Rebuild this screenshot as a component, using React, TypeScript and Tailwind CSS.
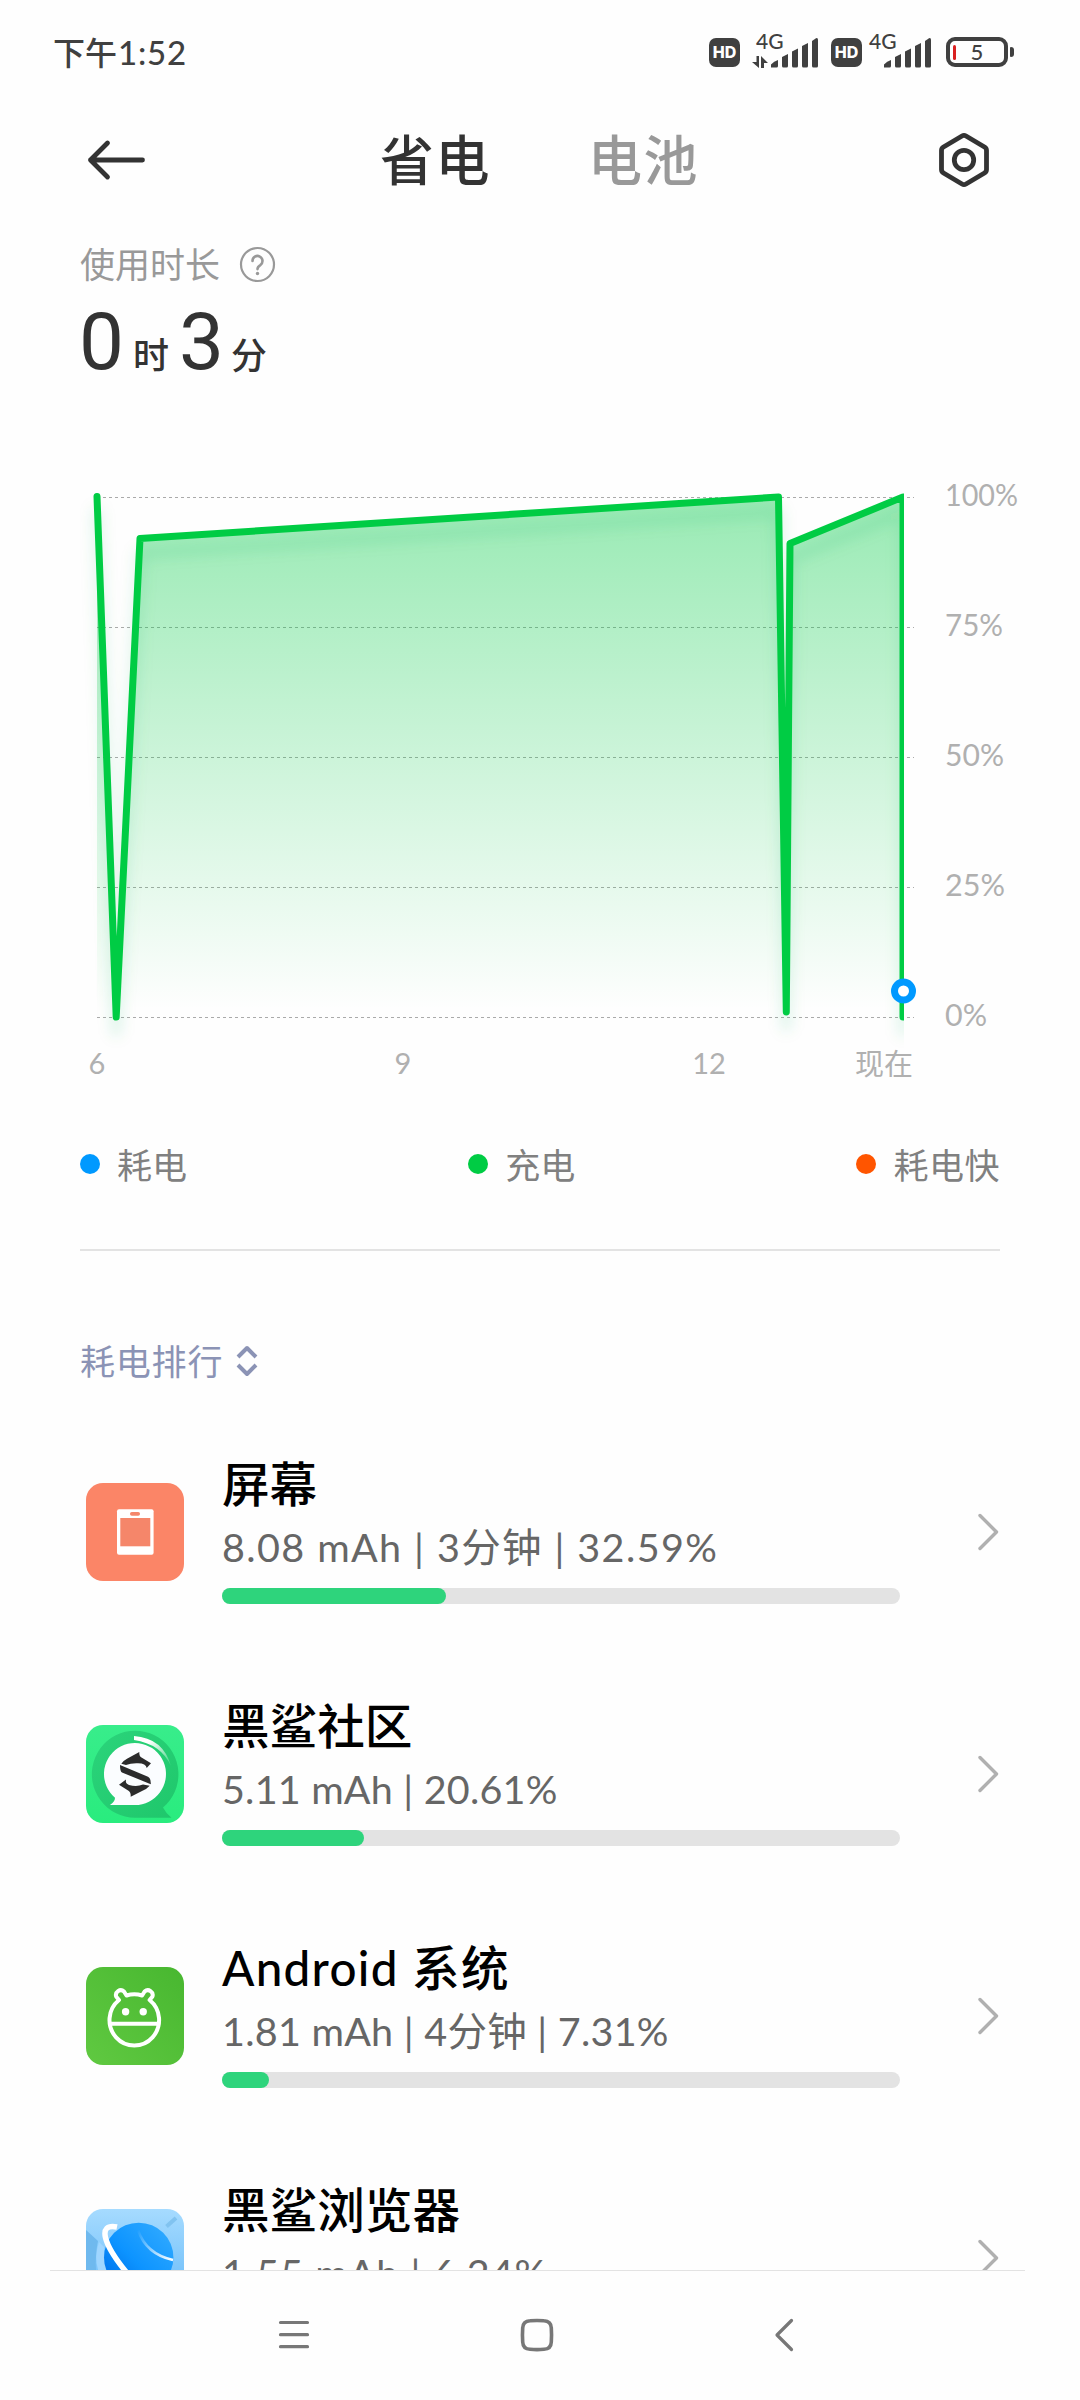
import type { ReactNode } from "react";

const SignalBars = () => (
  <svg width="48" height="30" viewBox="0 0 48 30" fill="#404040">
    <path d="M0 29.5v-3q3-3.5 7-4.500v6q0 1.500-1.500 1.500z" />
    <path d="M11 19l6-3v12q0 1.500-1.500 1.500h-3q-1.500 0-1.500-1.500z" />
    <path d="M21 13.500l6-3v17.500q0 1.500-1.500 1.500h-3q-1.500 0-1.500-1.500z" />
    <path d="M31 8l6-3v23q0 1.500-1.500 1.500h-3q-1.500 0-1.500-1.500z" />
    <path d="M41 3l4-2.800q2-.5 2 1.500V28q0 1.500-1.500 1.500h-3q-1.500 0-1.500-1.500z" />
  </svg>
);

const HdBadge = () => (
  <div className="flex h-[29px] w-[31px] items-center justify-center rounded-[7px] bg-[#404040] font-['Inter'] text-[16px] font-extrabold text-white">
    HD
  </div>
);

const StatusBar = () => (
  <div className="flex h-[106px] items-start pt-[33px] text-[#404040]">
    <div className="ml-[53px] flex h-[40px] items-center text-[32px] font-medium">
      下午
      <span className="ml-px text-[33px] tracking-[0.8px]">1:52</span>
    </div>
    <div className="mr-[66px] ml-auto flex h-[38px] items-center">
      <HdBadge />
      <div className="relative ml-3 flex h-[38px] w-[67px] items-end justify-end">
        <span className="absolute left-[4px] top-[-2px] text-[21px] leading-5 font-medium">4G</span>
        <svg className="mr-[3px] mb-[3px]" width="16" height="12" viewBox="0 0 16 12" fill="#404040">
          <path d="M4.500 0h2.500v12L0 6h4.500zM9 12V0l7 7h-4v5z" />
        </svg>
        <div className="mb-[3px]">
          <SignalBars />
        </div>
      </div>
      <div className="ml-3">
        <HdBadge />
      </div>
      <div className="relative ml-[7px] flex h-[38px] w-[63px] items-end justify-end">
        <span className="absolute left-0 top-[-2px] text-[21px] leading-5 font-medium">4G</span>
        <div className="mb-[3px]">
          <SignalBars />
        </div>
      </div>
      <div className="ml-[14px] flex items-center">
        <div className="relative flex h-[30px] w-[62px] items-center justify-center rounded-[9px] border-[4px] border-[#404040] text-[22px] leading-none font-medium">
          <span className="absolute left-[3px] h-[15px] w-[3px] rounded-full bg-[#d92020]" />
          5
        </div>
        <span className="ml-[2px] h-[10px] w-[4px] rounded-r-[3px] rounded-l-[1px] bg-[#404040]" />
      </div>
    </div>
  </div>
);

const Header = () => (
  <div className="flex h-[108px] items-center">
    <svg className="ml-[86px]" width="62" height="44" viewBox="0 0 62 44" fill="none" stroke="#333" strokeWidth="4.800" strokeLinecap="round" strokeLinejoin="round">
      <path d="M56.500 22H4.500M21.500 5L4.500 22l17 17" />
    </svg>
    <div className="ml-[232px] flex gap-[97px] pt-[2px] text-[54px] leading-none font-medium tracking-[1.5px]">
      <span className="text-[#333]">省电</span>
      <span className="text-[#999]">电池</span>
    </div>
    <svg className="mr-[88px] ml-auto" width="56" height="60" viewBox="0 0 56 60" fill="none" stroke="#333" strokeWidth="4.800" strokeLinejoin="round">
      <path d="M26 6q2-1.200 4 0l18.500 11q2 1.200 2 3.400v19.200q0 2.200-2 3.400L30 54q-2 1.200-4 0L7.500 43q-2-1.200-2-3.400V20.400q0-2.200 2-3.400z" />
      <circle cx="28" cy="30" r="9.700" />
    </svg>
  </div>
);

const Duration = () => (
  <div className="h-[256px] pt-[25px] pl-[80px]">
    <div className="flex h-[50px] items-center text-[35px] text-[#999]">
      使用时长
      <svg className="ml-[19px]" width="37" height="37" viewBox="0 0 37 37" fill="none" stroke="#999" strokeWidth="2.200" strokeLinecap="round">
        <circle cx="18.500" cy="18.500" r="16.500" />
        <path d="M13.500 15a5 5 0 1 1 7.800 4.100q-2.800 1.800-2.800 4" strokeWidth="2.600" />
        <circle cx="18.500" cy="27.500" r="1.700" fill="#999" stroke="none" />
      </svg>
    </div>
    <div className="mt-[5px] flex items-baseline text-[36px] text-[#333]">
      <span className="-ml-px w-[54px] font-['Roboto'] text-[80px] leading-[96px]">0</span>
      <span className="w-[46px] font-medium">时</span>
      <span className="w-[52px] font-['Roboto'] text-[80px] leading-[96px]">3</span>
      <span className="font-medium">分</span>
    </div>
  </div>
);

const gridLines = [
  { y: 497.5, label: "100%", width: 71 },
  { y: 627.5, label: "75%", width: 56 },
  { y: 757.5, label: "50%", width: 57 },
  { y: 887.5, label: "25%", width: 58 },
  { y: 1017.5, label: "0%", width: 40 },
];

const linePath = "M97 496.500L116.200 1017L140 538.500L778.500 497L786.300 1012L790 543.500L903 497V1017";

const BatteryChart = () => (
  <svg width="1080" height="630" viewBox="0 470 1080 630">
    <defs>
      <linearGradient id="area" gradientUnits="userSpaceOnUse" x1="0" y1="497" x2="0" y2="1010">
        <stop offset="0" stopColor="#00cc44" stopOpacity="0.4" />
        <stop offset="1" stopColor="#00cc44" stopOpacity="0" />
      </linearGradient>
      <filter id="glow" filterUnits="userSpaceOnUse" x="60" y="470" width="880" height="600">
        <feGaussianBlur stdDeviation="7" />
      </filter>
      <clipPath id="plot">
        <rect x="80" y="470" width="824" height="600" />
      </clipPath>
    </defs>
    {gridLines.map((line) => (
      <g key={line.label}>
        <path d={`M97 ${line.y}H914`} stroke="#aaa" strokeDasharray="3 3" />
        <text x="945" y={line.y + 8.5} fontSize="30" fill="#b0b0b0" textLength={line.width + 2} lengthAdjust="spacingAndGlyphs">
          {line.label}
        </text>
      </g>
    ))}
    <path d={`${linePath}H97Z`} fill="url(#area)" />
    <g clipPath="url(#plot)" fill="none" strokeLinejoin="round" strokeLinecap="round">
      <path d={linePath} transform="translate(0 15)" stroke="#1fae55" strokeOpacity="0.15" strokeWidth="9" filter="url(#glow)" />
      <path d={linePath} stroke="#00cc44" strokeWidth="7" />
    </g>
    <circle cx="903.500" cy="991" r="9" fill="#fff" stroke="#0099ff" strokeWidth="7" />
    <g fontSize="29" fill="#b0b0b0" textAnchor="middle">
      <text x="97" y="1074">6</text>
      <text x="403" y="1074">9</text>
      <text x="709" y="1074">12</text>
      <text x="884" y="1075">现在</text>
    </g>
  </svg>
);

const Legend = () => (
  <div className="mx-[80px] flex h-[151px] justify-between border-b-2 border-[#e3e3e3] pt-[40px] text-[35px] leading-[50px] text-[#808080]">
    <div className="flex h-[50px] items-center gap-[17px]">
      <span className="mb-[2px] h-5 w-5 rounded-full bg-[#0099ff]" />
      耗电
    </div>
    <div className="flex h-[50px] items-center gap-[17px]">
      <span className="mb-[2px] h-5 w-5 rounded-full bg-[#00cc44]" />
      充电
    </div>
    <div className="flex h-[50px] items-center gap-[17px] tracking-[0.5px]">
      <span className="mb-[2px] h-5 w-5 rounded-full bg-[#ff5500]" />
      耗电快
    </div>
  </div>
);

const ScreenIcon = () => (
  <svg width="98" height="98" viewBox="0 0 98 98">
    <rect width="98" height="98" rx="17" fill="#fb8567" />
    <rect x="31" y="26.300" width="36.600" height="45.400" rx="2" fill="#fff" />
    <rect x="34.300" y="35" width="30" height="28.300" fill="#f5866a" />
    <rect x="44" y="29" width="10" height="3.700" rx="1.800" fill="#f5866a" />
  </svg>
);

const CommunityIcon = () => (
  <svg width="98" height="98" viewBox="0 0 98 98">
    <defs>
      <linearGradient id="community" x1="0" y1="0" x2="0" y2="1">
        <stop stopColor="#38ed8b" />
        <stop offset="1" stopColor="#29ec7e" />
      </linearGradient>
      <linearGradient id="bubble" x1="0" y1="0" x2="1" y2="1">
        <stop stopColor="#2bd47b" />
        <stop offset="1" stopColor="#1fc76b" />
      </linearGradient>
      <linearGradient id="shine" x1="0" y1="0" x2="1" y2="1">
        <stop offset=".3" stopColor="#fff" />
        <stop offset="1" stopColor="#fff" stopOpacity="0.1" />
      </linearGradient>
    </defs>
    <rect width="98" height="98" rx="17" fill="url(#community)" />
    <path d="M49 92.700A43.300 43.500 0 1 1 77 82.500q3 6 8.500 10.200z" fill="url(#bubble)" />
    <path d="M48 11q29 2 37 30q-10-22-37-26z" fill="url(#shine)" />
    <path d="M49 80A31 31 0 1 0 29 72.700q0 4-5 7.300z" fill="#fbfdff" />
    <g fill="#2b2b2b">
      <path d="M53.300 27Q53 31 55.500 32.600L65 38.300L60.700 43Q60 38.500 52 38.300Q45 38 40 40L35.300 38.700Q37 36 41 33.800Z" />
      <path d="M34 40L62 51.800Q65 53 64.800 59.200L36 47.500Q34 46.500 34 40Z" />
      <path d="M44.700 71.700Q45 67.500 42.500 65.800L33 59.800L40 54.500Q39 58.500 43 60Q51 62 57 59.500L63.700 60.800Q61 64 56 66Z" />
    </g>
  </svg>
);

const AndroidIcon = () => (
  <svg width="98" height="98" viewBox="0 0 98 98" fill="none">
    <defs>
      <linearGradient id="android" x1="0" y1="1" x2="1" y2="0">
        <stop stopColor="#60c941" />
        <stop offset="1" stopColor="#48b730" />
      </linearGradient>
    </defs>
    <rect width="98" height="98" rx="17" fill="url(#android)" />
    <path
      d="M33 33L30.300 29.800A4.800 4.800 0 0 1 38 24.500L40.500 28.500Q48.300 26 56.100 28.500L58.600 24.500A4.800 4.800 0 0 1 66.300 29.800L63.600 33A24.800 25.500 0 1 1 33 33ZM24 56.700H72.600"
      stroke="#fff"
      strokeWidth="4"
      strokeLinejoin="round"
    />
    <circle cx="39.600" cy="44.700" r="3.700" fill="#fff" />
    <circle cx="57.200" cy="44.700" r="3.700" fill="#fff" />
  </svg>
);

const BrowserIcon = () => (
  <svg width="98" height="98" viewBox="0 0 98 98" fill="none">
    <defs>
      <linearGradient id="sky" x1="0" y1="0" x2="0" y2="1">
        <stop stopColor="#a6dbff" />
        <stop offset="1" stopColor="#62b8f8" />
      </linearGradient>
      <linearGradient id="planet" x1="0" y1="1" x2="1" y2="0">
        <stop offset=".15" stopColor="#0076ee" />
        <stop offset=".45" stopColor="#0d94ff" />
        <stop offset="1" stopColor="#36adff" />
      </linearGradient>
      <linearGradient id="streak" x1="0" y1="0" x2="1" y2="1">
        <stop stopColor="#fff" stopOpacity="0" />
        <stop offset="1" stopColor="#fff" />
      </linearGradient>
    </defs>
    <rect width="98" height="98" rx="17" fill="url(#sky)" />
    <path d="M0 21L12 32Q9 46 10 61H0Z" fill="#6fb9ee" />
    <path d="M13 33Q8 48 12 61H20L18 38Z" fill="#a0d6ff" />
    <path d="M80.500 17.500L90 9" stroke="#81c3f0" strokeWidth="4" />
    <circle cx="52.700" cy="48.400" r="34.700" fill="url(#planet)" />
    <path d="M52 21Q60 45 87 51" stroke="url(#streak)" strokeWidth="2.500" />
    <path d="M31 18C11 14 17 35 41 64" stroke="#fff" strokeWidth="5.500" />
  </svg>
);

type Usage = {
  name: string;
  nameClass: string;
  detail: string;
  detailClass: string;
  percent: number;
  icon: ReactNode;
};

const usages: Usage[] = [
  { name: "屏幕", nameClass: "", detail: "8.08 mAh | 3分钟 | 32.59%", detailClass: "tracking-[1.4px]", percent: 33, icon: <ScreenIcon /> },
  { name: "黑鲨社区", nameClass: "", detail: "5.11 mAh | 20.61%", detailClass: "tracking-[0.2px]", percent: 21, icon: <CommunityIcon /> },
  { name: "Android 系统", nameClass: "tracking-[1.3px]", detail: "1.81 mAh | 4分钟 | 7.31%", detailClass: "tracking-[0.25px]", percent: 7, icon: <AndroidIcon /> },
  { name: "黑鲨浏览器", nameClass: "", detail: "1.55 mAh | 6.24%", detailClass: "tracking-[1px]", percent: 6, icon: <BrowserIcon /> },
];

const UsageRow = ({ usage }: { usage: Usage }) => (
  <div className="flex h-[242px] shrink-0 items-center pr-[80px] pl-[86px]">
    {usage.icon}
    <div className="ml-[38px] w-[678px]">
      <div className={`flex h-12 items-center text-[47.6px] leading-none font-medium whitespace-pre text-black ${usage.nameClass}`}>
        {usage.name}
      </div>
      <div className={`mt-[9px] flex h-[60px] items-center text-[39.5px] leading-none whitespace-pre text-[#666] ${usage.detailClass}`}>
        {usage.detail}
      </div>
      <div className="mt-[11px] h-4 rounded-full bg-[#e3e3e3]">
        <div className="h-4 rounded-full bg-[#2ed47c]" style={{ width: `${usage.percent}%` }} />
      </div>
    </div>
    <svg className="ml-auto" width="23" height="40" viewBox="0 0 23 40" fill="none" stroke="#b0b0b0" strokeWidth="3.400" strokeLinecap="round" strokeLinejoin="round">
      <path d="M3 3.500L19.500 20L3 36.500" />
    </svg>
  </div>
);

const NavBar = () => (
  <div className="flex h-[130px] shrink-0 flex-col">
    <div className="ml-[50px] h-px w-[975px] bg-[#e3e3e3]" />
    <svg className="mt-[44px] ml-[276px]" width="520" height="40" viewBox="276 2315 520 40" fill="none" stroke="#777" strokeWidth="3.200" strokeLinecap="round" strokeLinejoin="round">
      <path d="M280.500 2322.500h27M280.500 2334.700h27M280.500 2346.700h27" />
      <path d="M530 2320.800q7-.6 14 0 7 .3 7.300 7.200.5 7 0 14-.3 7-7.300 7.300-7 .6-14 0-7-.3-7.300-7.300-.5-7 0-14 .3-6.900 7.300-7.200z" strokeWidth="3.600" />
      <path d="M791.500 2320.500L777 2335l14.500 14.500" />
    </svg>
  </div>
);

export default function App() {
  return (
    <div className="flex h-[2400px] w-[1080px] flex-col overflow-hidden bg-[#fefefe] font-['Lato','Noto_Sans_CJK_SC',sans-serif]">
      <StatusBar />
      <Header />
      <Duration />
      <BatteryChart />
      <Legend />
      <div className="flex h-[160px] shrink-0 items-center pt-[60px] pl-[80px] text-[35px] tracking-[0.8px] text-[#8b93b5]">
        耗电排行
        <svg className="ml-[12px]" width="24" height="34" viewBox="0 0 24 34" fill="none" stroke="#8b93b5" strokeWidth="4" strokeLinejoin="round">
          <path d="M3 13l9-9 9 9M3 21l9 9 9-9" />
        </svg>
      </div>
      <div className="flex min-h-0 flex-1 flex-col overflow-hidden">
        {usages.map((usage) => (
          <UsageRow key={usage.name} usage={usage} />
        ))}
      </div>
      <NavBar />
    </div>
  );
}
